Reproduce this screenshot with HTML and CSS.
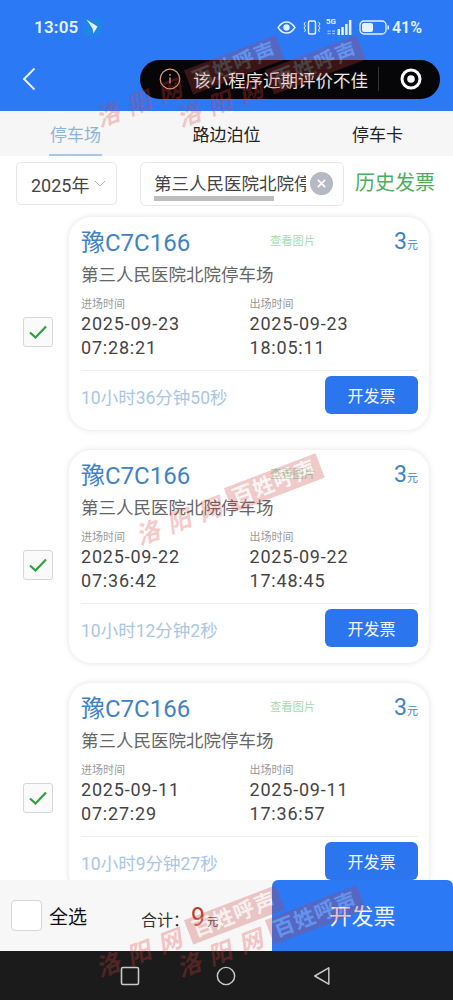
FILE: index.html
```html
<!DOCTYPE html>
<html lang="zh">
<head>
<meta charset="utf-8">
<title>停车场发票</title>
<link rel="stylesheet" href="styles.css">
</head>
<body>
<div class="page">
  <header class="header">
    <div class="status">
      <div class="status-left">
        <span class="clock">13:05</span>
        <svg class="app-icon" viewBox="0 0 18 18"><rect width="18" height="18" rx="4" fill="#1f86e6"/><path d="M3.500 1.500l11 7-4 7-1-5z" fill="#dff2fd"/></svg>
      </div>
      <div class="status-right">
        <svg class="ic-eye" viewBox="0 0 20 14"><path d="M1 7c2.500-4 5.500-6 9-6s6.500 2 9 6c-2.500 4-5.500 6-9 6s-6.500-2-9-6z" fill="none" stroke="#e6f2ff" stroke-width="1.600"/><circle cx="10" cy="7" r="3.400" fill="#e6f2ff"/></svg>
        <svg class="ic-vib" viewBox="0 0 18 15"><rect x="5.500" y="1" width="7" height="13" rx="1.500" fill="none" stroke="#e6f2ff" stroke-width="1.500"/><path d="M2.500 2l-1.500 2 1.500 2-1.500 2 1.500 2-1 2M15.500 2l1.500 2-1.500 2 1.500 2-1.500 2 1 2" fill="none" stroke="#e6f2ff" stroke-width="1"/></svg>
        <span class="signal"><span class="five-g">5G</span>
          <svg class="ic-bars" viewBox="0 0 26 15"><path d="M1 10.500h3v1.200H1zM1 13h3v1.200H1zM5.500 10.500h3v1.200h-3zM5.500 13h3v1.200h-3z" fill="#9cc4fa"/><path d="M11 9h2.500v6H11zM14.800 7h2.500v8h-2.500zM18.600 4h2.500v11h-2.500zM22.400 0h2.500v15h-2.500z" fill="#e6f2ff"/></svg>
        </span>
        <svg class="ic-batt" viewBox="0 0 30 15"><rect x="1" y="1" width="26" height="13" rx="4" fill="none" stroke="#e6f2ff" stroke-width="1.300"/><rect x="3" y="3" width="11" height="9" rx="2" fill="#e6f2ff"/><rect x="28.500" y="5.500" width="1.500" height="4" fill="#e6f2ff"/></svg>
        <span class="batt-text">41%</span>
      </div>
    </div>
    <div class="navbar">
      <svg class="back" viewBox="0 0 14 24"><path d="M12.500 1.500L2 12l10.500 10.500" fill="none" stroke="#eef5ff" stroke-width="1.900"/></svg>
      <div class="capsule">
        <svg class="ic-info" viewBox="0 0 22 22"><circle cx="11" cy="11" r="9.800" fill="none" stroke="#dca57a" stroke-width="1.200"/><path d="M11 9.500v6" stroke="#dca57a" stroke-width="1.300"/><circle cx="11" cy="6.800" r="0.900" fill="#dca57a"/></svg>
        <span class="capsule-text">该小程序近期评价不佳</span>
        <span class="capsule-sep"></span>
        <svg class="ic-target" viewBox="0 0 22 22"><circle cx="11" cy="11" r="9" fill="none" stroke="#fff" stroke-width="3"/><circle cx="11" cy="11" r="3.800" fill="#fff"/></svg>
      </div>
    </div>
  </header>

  <nav class="tabs">
    <div class="tab tab-active">停车场</div>
    <div class="tab">路边泊位</div>
    <div class="tab">停车卡</div>
  </nav>

  <div class="filters">
    <div class="year-select">
      <span>2025年</span>
      <svg class="chevron" viewBox="0 0 12 7"><path d="M1 1l5 5 5-5" fill="none" stroke="#a8acb2" stroke-width="1"/></svg>
    </div>
    <div class="search">
      <span class="search-text">第三人民医院北院停车场</span>
      <span class="search-clear"><svg viewBox="0 0 12 12"><path d="M2 2l8 8M10 2l-8 8" stroke="#fff" stroke-width="1.800"/></svg></span>
      <span class="search-scroll"></span>
    </div>
    <span class="history">历史发票</span>
  </div>

  <main class="list">
    <div class="row">
      <div class="check-cell"><span class="checkbox"><svg viewBox="0 0 20 16"><path d="M2 8.500l5.500 5L18 2.500" fill="none" stroke="#2ca13c" stroke-width="2.200"/></svg></span></div>
      <article class="card">
        <div class="card-top">
          <span class="plate">豫C7C166</span>
          <span class="view-pic">查看图片</span>
          <span class="price">3<small>元</small></span>
        </div>
        <div class="lot">第三人民医院北院停车场</div>
        <div class="times">
          <div class="time-col"><div class="time-label">进场时间</div><div class="time-val">2025-09-23</div><div class="time-val">07:28:21</div></div>
          <div class="time-col"><div class="time-label">出场时间</div><div class="time-val">2025-09-23</div><div class="time-val">18:05:11</div></div>
        </div>
        <div class="card-bottom">
          <span class="duration">10小时36分钟50秒</span>
          <button class="btn">开发票</button>
        </div>
      </article>
    </div>
    <div class="row">
      <div class="check-cell"><span class="checkbox"><svg viewBox="0 0 20 16"><path d="M2 8.500l5.500 5L18 2.500" fill="none" stroke="#2ca13c" stroke-width="2.200"/></svg></span></div>
      <article class="card">
        <div class="card-top">
          <span class="plate">豫C7C166</span>
          <span class="view-pic">查看图片</span>
          <span class="price">3<small>元</small></span>
        </div>
        <div class="lot">第三人民医院北院停车场</div>
        <div class="times">
          <div class="time-col"><div class="time-label">进场时间</div><div class="time-val">2025-09-22</div><div class="time-val">07:36:42</div></div>
          <div class="time-col"><div class="time-label">出场时间</div><div class="time-val">2025-09-22</div><div class="time-val">17:48:45</div></div>
        </div>
        <div class="card-bottom">
          <span class="duration">10小时12分钟2秒</span>
          <button class="btn">开发票</button>
        </div>
      </article>
    </div>
    <div class="row">
      <div class="check-cell"><span class="checkbox"><svg viewBox="0 0 20 16"><path d="M2 8.500l5.500 5L18 2.500" fill="none" stroke="#2ca13c" stroke-width="2.200"/></svg></span></div>
      <article class="card">
        <div class="card-top">
          <span class="plate">豫C7C166</span>
          <span class="view-pic">查看图片</span>
          <span class="price">3<small>元</small></span>
        </div>
        <div class="lot">第三人民医院北院停车场</div>
        <div class="times">
          <div class="time-col"><div class="time-label">进场时间</div><div class="time-val">2025-09-11</div><div class="time-val">07:27:29</div></div>
          <div class="time-col"><div class="time-label">出场时间</div><div class="time-val">2025-09-11</div><div class="time-val">17:36:57</div></div>
        </div>
        <div class="card-bottom">
          <span class="duration">10小时9分钟27秒</span>
          <button class="btn">开发票</button>
        </div>
      </article>
    </div>
  </main>

  <footer class="footer">
    <div class="select-all"><span class="checkbox checkbox-lg"></span><span>全选</span></div>
    <div class="total"><span class="total-label">合计：</span><span class="total-num">9</span><span class="total-unit">元</span></div>
    <button class="btn-main">开发票</button>
  </footer>

  <div class="sysnav">
    <svg class="sys-ic" viewBox="0 0 20 20"><rect x="1.500" y="1.500" width="17" height="17" rx="1.500" fill="none" stroke="#c9c9c9" stroke-width="1.600"/></svg>
    <svg class="sys-ic" viewBox="0 0 22 22"><circle cx="11" cy="11" r="9.500" fill="none" stroke="#c9c9c9" stroke-width="1.600"/></svg>
    <svg class="sys-ic" viewBox="0 0 20 22"><path d="M17.500 2L2 11l15.500 9z" fill="none" stroke="#c9c9c9" stroke-width="1.600" stroke-linejoin="round"/></svg>
  </div>

  <div class="wm wm-a"><span class="wm-city">洛阳网</span><span class="wm-box">百姓呼声</span></div>
  <div class="wm wm-b"><span class="wm-city">洛阳网</span><span class="wm-box">百姓呼声</span></div>
  <div class="wm wm-c"><span class="wm-city">洛阳网</span><span class="wm-box">百姓呼声</span></div>
  <div class="wm wm-d"><span class="wm-city">洛阳网</span><span class="wm-box">百姓呼声</span></div>
  <div class="wm wm-e"><span class="wm-city">洛阳网</span><span class="wm-box">百姓呼声</span></div>
</div>
</body>
</html>
```

FILE: styles.css
```css
* { box-sizing: border-box; }
html, body { margin: 0; padding: 0; }
body { font-family: Roboto, "Noto Sans CJK SC", sans-serif; background: #fff; }

.page {
  position: relative;
  width: 453px;
  height: 1000px;
  overflow: hidden;
  display: flex;
  flex-direction: column;
  background: #fff;
}

.header { height: 111px; flex: none; background: #2b79f5; color: #e6f2ff; }
.status { height: 54px; display: flex; justify-content: space-between; align-items: center; padding: 0 31px 0 34px; }
.status-left { display: flex; align-items: center; gap: 5px; }
.clock { font-size: 17px; font-weight: 600; letter-spacing: 0.2px; }
.app-icon { width: 18px; height: 18px; }
.status-right { display: flex; align-items: center; }
.ic-eye { width: 19px; height: 13px; margin-right: 7px; }
.ic-vib { width: 18px; height: 15px; margin-right: 5px; }
.signal { display: block; position: relative; width: 27px; height: 16px; margin-right: 6px; }
.five-g { font-size: 8px; font-weight: 700; line-height: 8px; position: absolute; left: 0; top: -1px; }
.ic-bars { width: 27px; height: 15px; position: absolute; right: 0; bottom: 0; }
.ic-batt { width: 30px; height: 15px; margin-right: 3px; }
.batt-text { font-size: 16px; font-weight: 600; }

.navbar { display: flex; align-items: center; justify-content: space-between; height: 46px; margin-top: 2px; padding: 0 13px 0 22px; }
.back { width: 14px; height: 24px; }
.capsule { width: 300px; height: 39px; border-radius: 20px; background: #060608; display: flex; align-items: center; padding: 0 18px 0 19px; }
.ic-info { width: 22px; height: 22px; flex: none; }
.capsule-text { font-size: 17.500px; color: #ece7e4; margin-left: 12px; white-space: nowrap; }
.capsule-sep { width: 1px; height: 24px; background: #333; margin-left: 10px; }
.ic-target { width: 22px; height: 22px; margin-left: auto; }

.tabs { height: 45px; flex: none; display: flex; background: #f6f6f6; }
.tab { flex: none; width: 151px; text-align: center; font-size: 17px; line-height: 48px; color: #222; position: relative; }
.tab-active { color: #8db5dc; }
.tab-active::after { content: ""; position: absolute; left: 49px; bottom: 0; width: 53px; height: 2px; background: #a9c8e6; }

.filters { height: 56px; flex: none; display: flex; align-items: flex-start; padding: 6px 0 0 16px; background: #fff; }
.year-select { width: 101px; height: 43px; border: 1px solid #e6e6e6; border-radius: 5px; display: flex; align-items: center; padding-left: 14px; font-size: 18px; color: #444; gap: 5px; }
.chevron { width: 12px; height: 7px; }
.search { position: relative; width: 204px; height: 44px; margin-left: 23px; border: 1px solid #e6e6e6; border-radius: 6px; display: flex; align-items: center; padding-left: 13px; }
.search-text { width: 152px; overflow: hidden; white-space: nowrap; font-size: 17.500px; color: #444; padding-bottom: 3px; }
.search-clear { position: absolute; right: 10px; top: 9px; width: 23px; height: 23px; border-radius: 50%; background: #b4b9c2; display: flex; align-items: center; justify-content: center; }
.search-clear svg { width: 11px; height: 11px; }
.search-scroll { position: absolute; left: 13px; bottom: 4px; width: 120px; height: 5px; background: #bdbdbd; }
.history { margin-left: 11px; font-size: 20px; line-height: 42px; color: #4cae5c; white-space: nowrap; }

.list { flex: 1; min-height: 0; overflow: hidden; padding-top: 5px; background: #fff; display: flex; flex-direction: column; gap: 20px; }
.row { display: flex; flex: none; }
.check-cell { width: 69px; display: flex; align-items: center; padding: 17px 0 0 23px; }
.checkbox { display: flex; align-items: center; justify-content: center; width: 30px; height: 30px; border: 1px solid #d6d6d6; border-radius: 3px; background: #fafafa; }
.checkbox svg { width: 20px; height: 16px; }
.card { width: 360px; height: 213px; border-radius: 22px; background: #fff; box-shadow: 0 0 6px rgba(0, 0, 0, 0.12); padding: 0 11px 0 12px; display: flex; flex-direction: column; }
.card-top { display: flex; align-items: center; height: 46px; position: relative; }
.plate { font-size: 24px; color: #3f82c4; white-space: nowrap; width: 189px; }
.view-pic { font-size: 11.300px; color: #a6dcb0; white-space: nowrap; }
.price { margin-left: auto; font-size: 23px; color: #3f82c4; line-height: 1; padding-top: 3px; }
.price small { font-size: 11px; }
.lot { font-size: 17.500px; line-height: 24px; color: #666; }
.times { display: flex; margin-top: 11px; }
.time-col { width: 169px; }
.time-label { font-size: 11px; line-height: 14px; color: #999; }
.time-val { font-size: 18px; line-height: 23.500px; color: #444; letter-spacing: 0.800px; }
.card-bottom { margin-top: 11px; border-top: 1px solid #eee; display: flex; justify-content: space-between; padding-top: 5px; }
.duration { font-size: 17.500px; color: #a9c6e4; line-height: 37px; padding-top: 4px; white-space: nowrap; }
.btn { width: 93px; height: 38px; border: 0; border-radius: 6px; background: #2b76ee; color: #f2f6ff; font: inherit; font-size: 16px; padding: 0; }

.footer { position: relative; height: 71px; flex: none; display: flex; align-items: center; background: #f7f7f7; }
.select-all { display: flex; align-items: center; gap: 7px; padding-left: 11px; font-size: 19px; color: #111; width: 141px; }
.checkbox-lg { width: 31px; height: 31px; border-radius: 4px; background: #fff; }
.total { display: flex; align-items: baseline; width: 131px; padding-top: 4px; }
.total-label { font-size: 16px; color: #333; }
.total-num { font-size: 25px; color: #c0392b; margin-left: 2px; }
.total-unit { font-size: 11px; color: #444; margin-left: 2px; }
.btn-main { width: 181px; height: 71px; border: 0; border-radius: 6px 6px 0 0; background: #2b79f5; color: #f2f6ff; font: inherit; font-size: 22px; padding: 0 0 3px; }

.sysnav { height: 49px; flex: none; background: #1b1b1b; display: flex; align-items: center; padding: 0 121px 0 120px; justify-content: space-between; }
.sys-ic { width: 20px; height: 20px; }

.wm { position: absolute; display: flex; align-items: center; transform: rotate(-21deg); transform-origin: left center; pointer-events: none; opacity: 0.27; white-space: nowrap; }
.wm-city { font-family: "Noto Sans CJK SC", sans-serif; font-style: italic; font-weight: 700; font-size: 24px; color: #e2403f; letter-spacing: 9px; }
.wm-box { font-family: "Liberation Serif", "Noto Sans CJK SC", serif; font-weight: 700; font-size: 21px; line-height: 26px; color: #f6dede; background: #c93a3a; padding: 0 5px; letter-spacing: 1px; }
.wm-a { left: 96px; top: 100px; }
.wm-b { left: 177px; top: 100px; }
.wm-c { left: 136px; top: 518px; }
.wm-d { left: 96px; top: 950px; }
.wm-e { left: 177px; top: 950px; }
```
